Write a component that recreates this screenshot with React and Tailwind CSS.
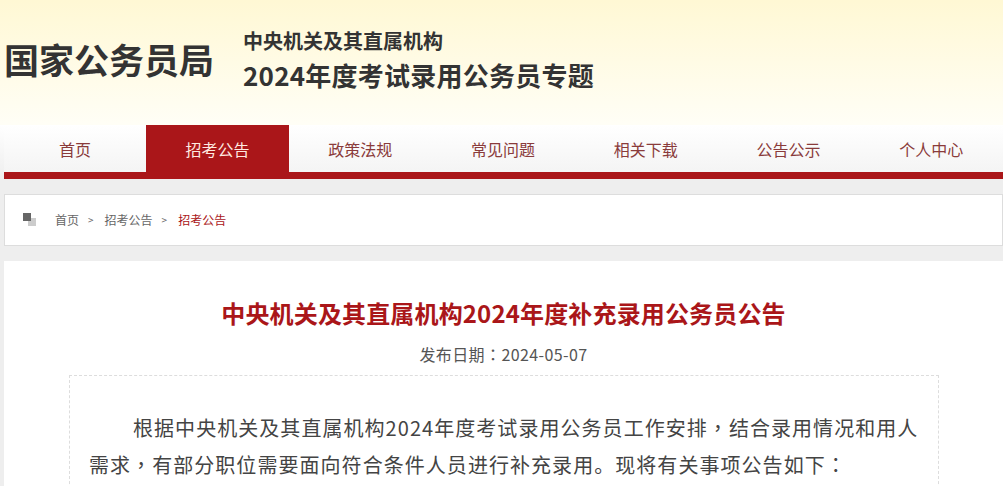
import React from "react";

const navItems = ["首页", "招考公告", "政策法规", "常见问题", "相关下载", "公告公示", "个人中心"];

// centred full-width punctuation, as in the original page font
const Punct = ({ children }) => <span className="font-['Noto_Sans_CJK_TC',sans-serif]">{children}</span>;

const App = () => {
  return (
    <div className="h-[486px] w-[1003px] overflow-hidden bg-[#eeeeee] font-['Noto_Sans_CJK_SC','Microsoft_YaHei',sans-serif]">
      <header className="flex h-[125px] items-start bg-gradient-to-b from-[#fff8d4] to-[#fffef6] pl-1">
        <h1 className="mt-[34px] w-[239px] text-[35px] font-bold leading-[50px] text-[#333333]">国家公务员局</h1>
        <div className="mt-[26px] font-bold text-[#333333]">
          <p className="text-[20px] leading-[30px]">中央机关及其直属机构</p>
          <p className="text-[26px] leading-[38px] tracking-[0.25px]">2024年度考试录用公务员专题</p>
        </div>
      </header>

      <div className="bg-gradient-to-b from-white to-[#eeeeee] pl-1">
        <nav className="flex h-[54px] w-[1001px] border-b-[7px] border-[#aa1619] bg-gradient-to-b from-white to-[#f4f4f4]">
          {navItems.map((item, index) => (
            <a
              key={item}
              href="#"
              className={
                index === 0
                  ? "flex h-[47px] w-[142px] items-center justify-center text-base text-[#8a3b3b]"
                  : index === 1
                    ? "flex h-[47px] w-[143px] items-center justify-center bg-[#aa1619] text-base text-[#ffe9e0]"
                    : "flex h-[47px] w-[142.75px] items-center justify-center text-base text-[#8a3b3b]"
              }
            >
              {item}
            </a>
          ))}
        </nav>
      </div>

      <div className="ml-1 mt-[15px] flex h-[52px] items-center border border-[#dddddd] bg-white pl-[18px] text-xs text-[#666666]">
        <svg width="14" height="14" viewBox="0 0 14 14" className="mr-[18px] mt-[-1px]" aria-hidden="true">
          <rect x="5" y="5" width="8" height="8" fill="#cccccc" />
          <rect x="0" y="0" width="8" height="8" fill="#666666" />
        </svg>
        <span>首页</span>
        <span className="ml-[9px] mr-[11px] text-[10px]">&gt;</span>
        <span>招考公告</span>
        <span className="ml-[9px] mr-[11px] text-[10px]">&gt;</span>
        <span className="text-[#aa1619]">招考公告</span>
      </div>

      <main className="ml-1 mt-[15px] h-[300px] bg-white pt-[34px]">
        <h2 className="text-center text-2xl font-bold leading-[36px] tracking-[0.15px] text-[#aa1619]">
          中央机关及其直属机构2024年度补充录用公务员公告
        </h2>
        <p className="mt-[11px] text-center text-base leading-[24px] tracking-[0.4px] text-[#555555]">
          发布日期<Punct>：</Punct>2024-05-07
        </p>
        <div className="ml-[65px] mt-[9px] h-[200px] w-[870px] border border-dashed border-[#dddddd] px-[19px] pt-[33px] text-[20px] leading-[37px] tracking-[1.05px] text-[#444444]">
          <p className="whitespace-nowrap indent-[44px]">
            根据中央机关及其直属机构2024年度考试录用公务员工作安排<Punct>，</Punct>结合录用情况和用人
            <br />
            需求<Punct>，</Punct>有部分职位需要面向符合条件人员进行补充录用。现将有关事项公告如下<Punct>：</Punct>
          </p>
        </div>
      </main>
    </div>
  );
};

export default App;
